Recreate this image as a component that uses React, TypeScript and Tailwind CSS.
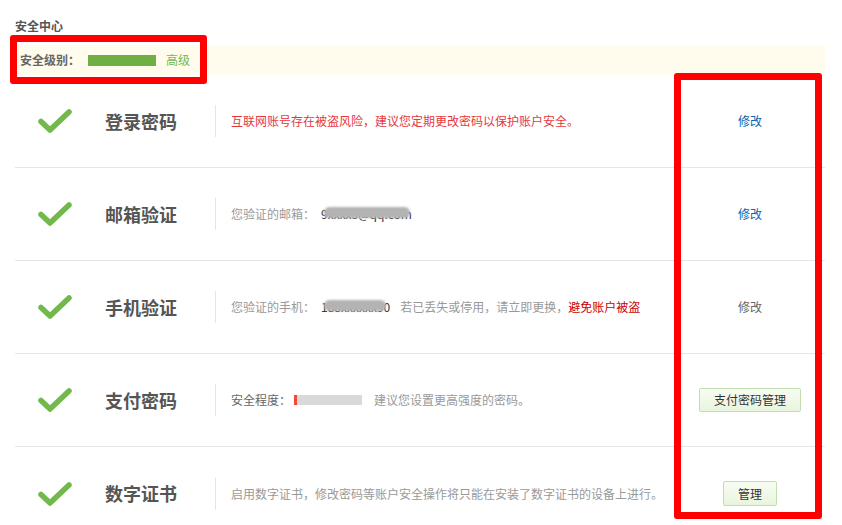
import React from "react";

const font = { fontFamily: '"Noto Sans CJK SC", "Liberation Sans", sans-serif' };

function Check() {
  return (
    <svg width="34" height="26" viewBox="0 0 34 26">
      <path d="M3 13.5 L12 22 L31 4" fill="none" stroke="#72b84b" strokeWidth="5.5" strokeLinecap="round" strokeLinejoin="round" />
    </svg>
  );
}

function Blob({ text, w, color = "#333" }: { text: string; w: number; color?: string }) {
  return (
    <span className="relative ml-[6px] inline-block">
      <span style={{ color }}>{text}</span>
      <span
        className="absolute top-[2px] left-[3px] h-[11px] rounded-full bg-[#b3b3b3] blur-[1px]"
        style={{ width: w }}
      />
    </span>
  );
}

type Row = { title: string; desc: React.ReactNode; action: React.ReactNode };

const rows: Row[] = [
  {
    title: "登录密码",
    desc: <span className="text-[#e4393c]">互联网账号存在被盗风险，建议您定期更改密码以保护账户安全。</span>,
    action: <span className="text-[#0b63b0]">修改</span>,
  },
  {
    title: "邮箱验证",
    desc: (
      <span className="text-[#999]">
        您验证的邮箱：<Blob text="9xxxx3@qq.com" w={86} />
      </span>
    ),
    action: <span className="text-[#0b63b0]">修改</span>,
  },
  {
    title: "手机验证",
    desc: (
      <span className="text-[#999]">
        您验证的手机：<Blob text="188xxxxxx90" w={62} />
        <span className="ml-[10px]">若已丢失或停用，请立即更换，</span>
        <span className="text-[#cc0000]">避免账户被盗</span>
      </span>
    ),
    action: <span className="text-[#666]">修改</span>,
  },
  {
    title: "支付密码",
    desc: (
      <span className="flex items-center text-[#999]">
        <span className="text-[#666]">安全程度：</span>
        <span className="ml-[3px] flex h-[10px] w-[68px] bg-[#d9d9d9]">
          <span className="h-full w-[3px] bg-[#f04a3a]" />
        </span>
        <span className="ml-[12px]">建议您设置更高强度的密码。</span>
      </span>
    ),
    action: (
      <span className="inline-flex h-[24px] w-[102px] items-center justify-center rounded-[2px] border border-[#c3ddb0] bg-gradient-to-b from-[#f7fcf2] to-[#e9f5de] text-[#333]">
        支付密码管理
      </span>
    ),
  },
  {
    title: "数字证书",
    desc: <span className="text-[#999]">启用数字证书，修改密码等账户安全操作将只能在安装了数字证书的设备上进行。</span>,
    action: (
      <span className="inline-flex h-[25px] w-[54px] items-center justify-center rounded-[2px] border border-[#c3ddb0] bg-gradient-to-b from-[#f7fcf2] to-[#e9f5de] text-[#333]">
        管理
      </span>
    ),
  },
];

export default function App() {
  return (
    <div className="relative h-[525px] w-[842px] overflow-hidden bg-white" style={font}>
      <div className="w-[810px] pl-[15px] pt-[17px] box-content">
        <div className="mb-[10px] text-[12px] font-bold leading-[18px] text-[#555]">安全中心</div>
        <div className="flex h-[30px] items-center bg-[#fffced] pl-[5px] text-[12px]">
          <span className="font-bold text-[#666]">安全级别：</span>
          <span className="ml-[8px] h-[11px] w-[68px] bg-[#6fb044]" />
          <span className="ml-[10px] text-[#72b84b]">高级</span>
        </div>
        {rows.map((r, i) => (
          <div
            key={i}
            className={`flex h-[93px] items-center text-[12px] ${i < rows.length - 1 ? "border-b border-[#e5e5e5]" : ""}`}
          >
            <div className="flex w-[90px] pl-[23px]">
              <Check />
            </div>
            <div className="w-[110px] text-[18px] font-bold text-[#555]">{r.title}</div>
            <div className="h-[32px] w-px bg-[#e5e5e5]" />
            <div className="flex-1 pl-[15px]">{r.desc}</div>
            <div className="w-[150px] text-center">{r.action}</div>
          </div>
        ))}
      </div>
      <div className="absolute left-[10px] top-[35px] h-[49px] w-[197px] rounded-[3px] border-[7px] border-[#ff0000]" />
      <div className="absolute left-[674px] top-[73px] h-[446px] w-[148px] rounded-[3px] border-[7px] border-[#ff0000]" />
    </div>
  );
}
